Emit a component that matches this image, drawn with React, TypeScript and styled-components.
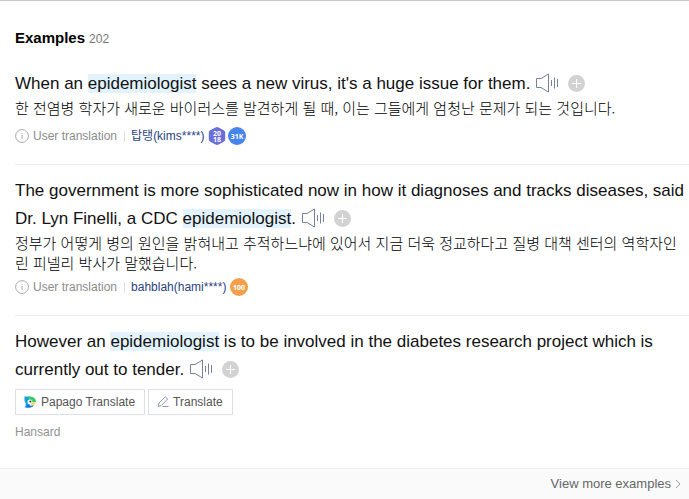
import React from "react";
import styled, { createGlobalStyle } from "styled-components";

const GlobalStyle = createGlobalStyle`
  * { box-sizing: border-box; }
  body {
    margin: 0;
    background: #fff;
    color: #111;
    font-family: "Liberation Sans", "Noto Sans CJK KR", sans-serif;
  }
`;

const Section = styled.section`
  border-top: 1px solid #c8c8c8;
`;

const Header = styled.header`
  display: flex;
  align-items: baseline;
  gap: 4px;
  padding: 27px 15px 11px;
  line-height: 20px;
`;

const Title = styled.h2`
  margin: 0;
  font-size: 15px;
  font-weight: 700;
  color: #000;
`;

const Count = styled.span`
  font-size: 12px;
  color: #777;
`;

const List = styled.ul`
  list-style: none;
  margin: 0;
  padding: 0 0 27px 15px;
`;

const Item = styled.li`
  padding: 12px 0 19px;

  & + & {
    border-top: 1px solid #eee;
  }

  &:first-child {
    padding-top: 10px;
  }

  &:last-child {
    padding-bottom: 0;
  }
`;

const Sentence = styled.p`
  margin: 0;
  font-size: 17px;
  line-height: 28px;
`;

const Highlight = styled.mark`
  background: #e3f3fe;
  color: inherit;
`;

const Controls = styled.span`
  display: inline-flex;
  align-items: center;
  gap: 9px;
  margin-left: 5px;
  height: 20px;
  vertical-align: -4px;
`;

const IconButton = styled.button`
  display: block;
  padding: 0;
  border: 0;
  background: none;
  cursor: pointer;

  svg {
    display: block;
  }
`;

const Korean = styled.p`
  margin: 0;
  font-family: "Noto Sans CJK KR", sans-serif;
  font-size: 15px;
  font-weight: 300;
  line-height: 20px;
  color: #000;
`;

const Meta = styled.div<{ $tall?: boolean }>`
  display: flex;
  align-items: flex-end;
  height: ${(p) => (p.$tall ? 27 : 23)}px;
  font-size: 12px;
  line-height: 18px;
  color: #8c8c8c;
`;

const MetaPart = styled.span`
  display: flex;
  align-items: center;
  gap: 4px;
  height: 18px;
`;

const Author = styled.a`
  margin-left: 7px;
  padding-left: 7px;
  color: #2b4480;
  text-decoration: none;
  background: linear-gradient(#ddd, #ddd) left center / 1px 11px no-repeat;
`;

const Badges = styled(MetaPart)`
  gap: 2px;
  margin-left: 4px;
`;

const Actions = styled.div`
  display: flex;
  gap: 3px;
  margin-top: 5px;
`;

const ActionButton = styled.button`
  display: flex;
  align-items: center;
  gap: 4px;
  height: 26px;
  padding: 0 9px 0 8px;
  border: 1px solid #dcdfe3;
  background: #fff;
  font: 12px/18px "Liberation Sans", sans-serif;
  color: #555;
  cursor: pointer;
`;

const Source = styled.a`
  display: block;
  margin-top: 8px;
  font-size: 12px;
  line-height: 18px;
  color: #929292;
  text-decoration: none;
`;

const Footer = styled.footer`
  display: flex;
  justify-content: flex-end;
  padding: 5px 8px;
  border-top: 1px solid #f0f0f0;
  background: #fafafa;
`;

const MoreLink = styled.a`
  display: flex;
  align-items: center;
  gap: 4px;
  font-size: 13px;
  line-height: 20px;
  color: #666;
  text-decoration: none;
`;

const SpeakerIcon = () => (
  <svg width="24" height="20" viewBox="0 0 24 20" fill="none" stroke="#76819a">
    <path d="M1.5 5.5H6L13.5 1v18L6 14.5H1.5z" />
    <path d="M16.5 7v6M19.5 4.5v11M22.5 6v8" />
  </svg>
);

const PlusIcon = () => (
  <svg width="17" height="17" viewBox="0 0 17 17">
    <circle cx="8.5" cy="8.5" r="8.5" fill="#d2d2d2" />
    <path d="M8.5 4v9M4 8.5h9" stroke="#fff" />
  </svg>
);

const InfoIcon = () => (
  <svg width="14" height="14" viewBox="0 0 14 14" fill="none" stroke="#aaa">
    <circle cx="7" cy="7" r="6.4" />
    <path d="M7 6v4M7 4v1" />
  </svg>
);

const BadgeText = styled.text`
  fill: #fff;
  font-family: "Open Sans", sans-serif;
  font-size: 7px;
  font-weight: 700;
  text-anchor: middle;
`;

const YearBadge = () => (
  <svg width="18" height="18" viewBox="0 0 18 18" role="img" aria-label="2018">
    <path
      d="M7.5 .5q1.5 -.8 3 0l5.3 2.8q1.4 .8 1.4 2.3v6.8q0 1.5 -1.4 2.3l-5.3 2.8q-1.5 .8 -3 0l-5.3 -2.8q-1.4 -.8 -1.4 -2.3V5.6q0 -1.5 1.4 -2.3z"
      fill="#6b6edb"
    />
    <BadgeText x="9" y="9">20</BadgeText>
    <BadgeText x="9" y="15">18</BadgeText>
  </svg>
);

const RoundBadge = ({ color, label }: { color: string; label: string }) => (
  <svg width="18" height="18" viewBox="0 0 18 18" role="img" aria-label={label}>
    <circle cx="9" cy="9" r="9" fill={color} />
    <BadgeText x="9" y="12">{label}</BadgeText>
  </svg>
);

const PapagoIcon = () => (
  <svg width="13" height="12" viewBox="0 0 13 12">
    <path d="M.5 .5H6v11H.5q1.6 -2 1.3 -4Q.5 6.5 .5 4z" fill="#159de8" />
    <path d="M4 .5h2.5A5.5 5.5 0 0 1 12 6H8.5Q5.5 6 4 2z" fill="#35ca69" />
    <path d="M3 8.5Q7 11 10.5 8.5 8.5 12 5.5 11.5H2.2z" fill="#1473df" />
    <circle cx="6" cy="6" r="2.5" fill="#fff" />
    <circle cx="6.4" cy="5.6" r="1" fill="#26384b" />
    <path d="M7.5 6.3H12L10 8.7H6.8z" fill="#ffd64a" />
  </svg>
);

const PencilIcon = () => (
  <svg width="12" height="12" viewBox="0 0 12 12" fill="none" stroke="#8f99b3">
    <path d="M1 10.5l1 -3.5L8.3 .8l2.4 2.2L4.3 9.6zM5.5 10.5h6" />
  </svg>
);

const ChevronIcon = () => (
  <svg width="6" height="10" viewBox="0 0 6 10" fill="none" stroke="#999">
    <path d="M1 1l4 4-4 4" />
  </svg>
);

const SentenceControls = () => (
  <Controls>
    <IconButton type="button" aria-label="Listen"><SpeakerIcon /></IconButton>
    <IconButton type="button" aria-label="Add"><PlusIcon /></IconButton>
  </Controls>
);

const Translator = ({ name, tall, children }: { name: string; tall?: boolean; children: React.ReactNode }) => (
  <Meta $tall={tall}>
    <MetaPart><InfoIcon />User translation</MetaPart>
    <Author href="#">{name}</Author>
    <Badges>{children}</Badges>
  </Meta>
);

export default function App() {
  return (
    <Section>
      <GlobalStyle />
      <Header>
        <Title>Examples</Title>
        <Count>202</Count>
      </Header>
      <List>
        <Item>
          <Sentence lang="en">
            When an <Highlight>epidemiologist</Highlight> sees a new virus, it's a huge issue for them.
            <SentenceControls />
          </Sentence>
          <Korean lang="ko">
            한 전염병 학자가 새로운 바이러스를 발견하게 될 때, 이는 그들에게 엄청난 문제가 되는 것입니다.
          </Korean>
          <Translator name="탑탱(kims****)" tall>
            <YearBadge />
            <RoundBadge color="#4785ee" label="31K" />
          </Translator>
        </Item>
        <Item>
          <Sentence lang="en">
            The government is more sophisticated now in how it diagnoses and tracks diseases, said
            Dr. Lyn Finelli, a CDC <Highlight>epidemiologist</Highlight>.
            <SentenceControls />
          </Sentence>
          <Korean lang="ko">
            정부가 어떻게 병의 원인을 밝혀내고 추적하느냐에 있어서 지금 더욱 정교하다고 질병 대책 센터의 역학자인
            린 피넬리 박사가 말했습니다.
          </Korean>
          <Translator name="bahblah(hami****)">
            <RoundBadge color="#f2a04c" label="100" />
          </Translator>
        </Item>
        <Item>
          <Sentence lang="en">
            However an <Highlight>epidemiologist</Highlight> is to be involved in the diabetes research
            project which is currently out to tender.
            <SentenceControls />
          </Sentence>
          <Actions>
            <ActionButton type="button"><PapagoIcon />Papago Translate</ActionButton>
            <ActionButton type="button"><PencilIcon />Translate</ActionButton>
          </Actions>
          <Source href="#">Hansard</Source>
        </Item>
      </List>
      <Footer>
        <MoreLink href="#">View more examples<ChevronIcon /></MoreLink>
      </Footer>
    </Section>
  );
}
